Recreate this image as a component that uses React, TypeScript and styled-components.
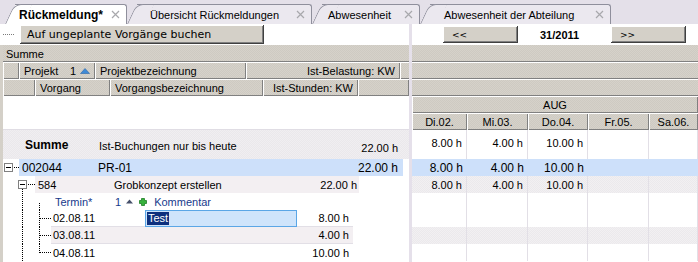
import React from 'react';
import styled, { createGlobalStyle } from 'styled-components';

const GlobalStyle = createGlobalStyle`
  html, body { margin: 0; padding: 0; background: #fff; }
  body {
    font-family: "Liberation Sans", Arial, sans-serif;
    font-size: 11px;
    color: #000;
  }
`;

const hatch = (a: string, b: string) =>
  `background-color: ${a}; background-image: repeating-conic-gradient(${a} 0 25%, ${b} 0 50%); background-size: 2px 2px;`;

const BLUE = '#cde0fa';
const LINE = '#e2dfe6';

const Frame = styled.div`
  width: 698px;
  height: 262px;
  overflow: hidden;
  display: flex;
  flex-direction: column;
  background: #fff;
`;

/* ---------- tabs ---------- */
const TabBar = styled.div`
  height: 24px;
  flex: none;
  display: flex;
  align-items: flex-end;
  background: #e4e0e9;
`;

const Tab = styled.div<{ $active?: boolean; $w: number; $pl: number }>`
  position: relative;
  z-index: ${p => (p.$active ? 2 : 1)};
  box-sizing: border-box;
  width: ${p => p.$w}px;
  flex: none;
  height: 20px;
  margin-left: 10px;
  &:first-child { margin-left: 15px; }
  padding: 0 6px 0 ${p => p.$pl}px;
  display: flex;
  align-items: center;
  background: ${p => (p.$active ? '#fff' : '#ebe8ef')};
  border-top: 1px solid #8f8f9c;
  border-right: 1px solid #8f8f9c;
  border-top-right-radius: 3px;
  font-size: ${p => (p.$active ? 12 : 11)}px;
  font-weight: ${p => (p.$active ? 700 : 400)};
  white-space: nowrap;
  &::before {
    content: '';
    position: absolute;
    top: -1px;
    bottom: 0;
    left: -10px;
    width: 17px;
    background: inherit;
    border-left: 1px solid #8f8f9c;
    border-top: 1px solid #8f8f9c;
    border-top-left-radius: 7px;
    transform: skewX(-25deg);
    transform-origin: bottom left;
    z-index: -1;
  }
`;

const TabLabel = styled.span`
  flex: 1;
`;

const Glyph = styled.svg`
  flex: none;
  display: block;
`;

const CloseIcon = () => (
  <Glyph width="9" height="9" viewBox="0 0 9 9">
    <path d="M1 1 L8 8 M8 1 L1 8" stroke="#a8a8ac" strokeWidth="1.2" />
  </Glyph>
);

/* ---------- panes ---------- */
const Body = styled.div`
  flex: 1;
  display: flex;
  min-height: 0;
`;

const LeftPane = styled.div`
  width: 409px;
  flex: none;
  display: flex;
  flex-direction: column;
`;

const Divider = styled.div`
  width: 3px;
  flex: none;
  background: #e5e0ea;
`;

const RightPane = styled.div`
  flex: 1;
  min-width: 0;
  display: flex;
  flex-direction: column;
`;

const Toolbar = styled.div`
  height: 21px;
  flex: none;
  display: flex;
  align-items: center;
  padding-left: 3px;
  background: #fff;
`;

const Grip = styled.div`
  width: 11px;
  flex: none;
  border-top: 1px dotted #7a7a7a;
  margin-right: 6px;
`;

const winButton = `
  box-sizing: border-box;
  flex: none;
  margin: 0;
  border: 0;
  background: #d4d0c8;
  box-shadow: inset -1px -1px #404040, inset 1px 1px #fff, inset -2px -2px #808080;
  color: #000;
  text-align: left;
  cursor: default;
`;

const ToolButton = styled.button`
  ${winButton}
  width: 244px;
  height: 19px;
  padding: 0 0 0 7px;
  font-family: "DejaVu Sans", Verdana, sans-serif;
  font-size: 11px;
`;

const LeftBody = styled.div`
  flex: 1;
  display: flex;
  flex-direction: column;
  border-left: 3px solid #d4d0c8;
`;

const SectionBar = styled.div`
  height: 17px;
  flex: none;
  display: flex;
  align-items: center;
  padding-left: 3px;
  ${hatch('#d6d2ca', '#cecac2')}
  box-shadow: inset 0 -1px #808080;
`;

const HeaderRow = styled.div`
  height: 17px;
  flex: none;
  display: flex;
  ${hatch('#d6d2ca', '#cecac2')}
`;

const HeadCell = styled.div<{ $w?: number; $align?: 'left' | 'right' | 'center' }>`
  box-sizing: border-box;
  width: ${p => (p.$w ? `${p.$w}px` : 'auto')};
  flex: ${p => (p.$w ? 'none' : '1')};
  padding: 0 5px;
  display: flex;
  align-items: center;
  justify-content: ${p => (p.$align === 'right' ? 'flex-end' : p.$align === 'center' ? 'center' : 'flex-start')};
  box-shadow: inset 1px 1px #fff, inset -1px -1px #808080;
  white-space: nowrap;
  overflow: hidden;
`;

const SortArrow = () => (
  <Glyph width="10" height="6" viewBox="0 0 10 6" style={{ marginLeft: 4 }}>
    <polygon points="0.5,5.5 5,0.5 9.5,5.5" fill="#3f8ad6" stroke="#2a64a8" strokeWidth="0.6" />
  </Glyph>
);

const Spacer = styled.div`
  height: 33px;
  flex: none;
  border-bottom: 1px solid #e0dde4;
  background: #fff;
`;

const SumRow = styled.div`
  height: 29px;
  flex: none;
  display: flex;
  align-items: center;
  ${hatch('#f0eef1', '#eae8eb')}
`;

const TreeRow = styled.div<{ $fs?: number }>`
  height: 17px;
  flex: none;
  display: flex;
  align-items: stretch;
  font-size: ${p => p.$fs ?? 11}px;
  background: #fff;
`;

const Band = styled.div<{ $bg: string; $w?: number; $mr?: number; $rule?: boolean }>`
  box-sizing: border-box;
  display: flex;
  align-items: center;
  ${p => (p.$w ? `width: ${p.$w}px; flex: none;` : 'flex: 1;')}
  margin-right: ${p => p.$mr ?? 0}px;
  background: ${p => p.$bg};
  border-bottom: ${p => (p.$rule ? `1px solid ${LINE}` : '0')};
`;

const Cell = styled.div<{ $w?: number; $pl?: number; $pr?: number; $right?: boolean; $bold?: boolean; $fs?: number; $pt?: number }>`
  box-sizing: border-box;
  ${p => (p.$w ? `width: ${p.$w}px; flex: none;` : 'flex: 1;')}
  padding: ${p => p.$pt ?? 0}px ${p => p.$pr ?? 0}px 0 ${p => p.$pl ?? 0}px;
  display: flex;
  align-items: center;
  justify-content: ${p => (p.$right ? 'flex-end' : 'flex-start')};
  white-space: nowrap;
  font-weight: ${p => (p.$bold ? 700 : 400)};
  ${p => (p.$fs ? `font-size: ${p.$fs}px;` : '')}
`;

const BlueText = styled.span`
  color: #173a8c;
  display: inline-flex;
  align-items: center;
`;

const EditBox = styled.div`
  box-sizing: border-box;
  width: 152px;
  height: 17px;
  border: 1px solid #5ba6e6;
  background: #cfe4fb;
  display: flex;
  align-items: center;
  padding-left: 1px;
`;

const Selected = styled.span`
  background: #0d2f7d;
  color: #fff;
  padding: 0 1px;
  line-height: 13px;
`;

/* ---------- right pane ---------- */
const NavBar = styled.div`
  height: 21px;
  flex: none;
  display: flex;
  align-items: center;
  padding-left: 31px;
  background: #fff;
`;

const NavButton = styled.button`
  ${winButton}
  width: 75px;
  height: 17px;
  padding: 0 0 0 9px;
  font-family: "DejaVu Sans", Verdana, sans-serif;
  font-size: 9px;
`;

const WeekLabel = styled.div`
  width: 93px;
  flex: none;
  padding-left: 22px;
  box-sizing: border-box;
  font-weight: 700;
  font-size: 11px;
`;

const GrayRow = styled.div<{ $top?: boolean }>`
  height: 17px;
  flex: none;
  ${hatch('#d6d2ca', '#cecac2')}
  box-shadow: inset 0 -1px #808080${p => (p.$top ? ', inset 0 1px #fff' : '')};
`;

const MonthRow = styled.div`
  height: 17px;
  flex: none;
  display: flex;
  ${hatch('#d6d2ca', '#cecac2')}
`;

const DayGrid = styled.div<{ $h: number; $bg: string; $fs?: number }>`
  height: ${p => p.$h}px;
  flex: none;
  display: grid;
  grid-template-columns: 55px 61px 60px 61px 1fr;
  ${p => p.$bg}
  font-size: ${p => p.$fs ?? 11}px;
`;

const ValueCell = styled.div<{ $lines?: boolean; $top?: boolean }>`
  box-sizing: border-box;
  display: flex;
  justify-content: flex-end;
  align-items: ${p => (p.$top ? 'flex-start' : 'center')};
  padding: ${p => (p.$top ? 7 : 0)}px 4px 0 0;
  border-right: ${p => (p.$lines ? `1px solid ${LINE}` : '0')};
  white-space: nowrap;
`;

/* ---------- tree connectors ---------- */
const dot = { stroke: '#000', strokeWidth: 1, strokeDasharray: '1 1', shapeRendering: 'crispEdges' as const };

const ToggleBox = ({ x }: { x: number }) => (
  <>
    <rect x={x + 0.5} y={4.5} width={8} height={8} fill="#fff" stroke="#808080" shapeRendering="crispEdges" />
    <line x1={x + 2} y1={8.5} x2={x + 7} y2={8.5} stroke="#000" shapeRendering="crispEdges" />
  </>
);

const ProjectGutter = () => (
  <Glyph width="16" height="17">
    <ToggleBox x={1} />
    <line x1={11} y1={8.5} x2={16} y2={8.5} {...dot} />
  </Glyph>
);

const TaskGutter = () => (
  <Glyph width="32" height="17">
    <ToggleBox x={15} />
    <line x1={25} y1={8.5} x2={32} y2={8.5} {...dot} />
    <line x1={19.5} y1={13} x2={19.5} y2={17} {...dot} />
  </Glyph>
);

const LeafGutter = ({ kind }: { kind: 'head' | 'mid' | 'last' }) => (
  <Glyph width="48" height="17">
    <line x1={19.5} y1={0} x2={19.5} y2={17} {...dot} />
    {kind === 'head' && <line x1={36.5} y1={10} x2={36.5} y2={17} {...dot} />}
    {kind !== 'head' && (
      <>
        <line x1={36.5} y1={0} x2={36.5} y2={kind === 'last' ? 9 : 17} {...dot} />
        <line x1={37} y1={8.5} x2={48} y2={8.5} {...dot} />
      </>
    )}
  </Glyph>
);

const PlusIcon = () => (
  <Glyph width="8" height="8" viewBox="0 0 8 8" style={{ margin: '0 7px 0 6px' }}>
    <path d="M2.5 0.5h3v2h2v3h-2v2h-3v-2h-2v-3h2z" fill="#37b23c" stroke="#1e7d25" strokeWidth="0.8" />
  </Glyph>
);

const SmallArrow = () => (
  <Glyph width="7" height="5" viewBox="0 0 7 5" style={{ marginLeft: 5 }}>
    <polygon points="0,4.5 3.5,0.5 7,4.5" fill="#46506a" />
  </Glyph>
);

/* ---------- data ---------- */
const tabs = [
  { label: 'Rückmeldung*', active: true, w: 112, pl: 4 },
  { label: 'Übersicht Rückmeldungen', w: 175, pl: 13 },
  { label: 'Abwesenheit', w: 98, pl: 6 },
  { label: 'Abwesenheit der Abteilung', w: 181, pl: 14 },
];

const days = ['Di.02.', 'Mi.03.', 'Do.04.', 'Fr.05.', 'Sa.06.'];
const hours = ['8.00 h', '4.00 h', '10.00 h', '', ''];
const empty = ['', '', '', '', ''];

const dates = [
  { date: '02.08.11', value: '8.00 h', edit: true },
  { date: '03.08.11', value: '4.00 h', shade: true },
  { date: '04.08.11', value: '10.00 h' },
];

const lightHatch = hatch('#f2f0f2', '#ebe9ec');

const rightRows = [
  { h: 29, bg: 'background: #fff;', vals: hours, lines: true, top: true },
  { h: 17, bg: `background: ${BLUE};`, vals: hours, fs: 12 },
  { h: 17, bg: lightHatch, vals: hours, lines: true },
  { h: 17, bg: 'background: #fff;', vals: empty, lines: true },
  { h: 17, bg: 'background: #fff;', vals: empty, lines: true },
  { h: 17, bg: lightHatch, vals: empty, lines: true },
  { h: 17, bg: 'background: #fff;', vals: empty, lines: true },
];

export default function App() {
  return (
    <>
      <GlobalStyle />
      <Frame>
        <TabBar>
          {tabs.map(t => (
            <Tab key={t.label} $active={t.active} $w={t.w} $pl={t.pl}>
              <TabLabel>{t.label}</TabLabel>
              <CloseIcon />
            </Tab>
          ))}
        </TabBar>

        <Body>
          <LeftPane>
            <Toolbar>
              <Grip />
              <ToolButton>Auf ungeplante Vorgänge buchen</ToolButton>
            </Toolbar>
            <LeftBody>
              <SectionBar>Summe</SectionBar>
              <HeaderRow>
                <HeadCell $w={16} />
                <HeadCell $w={76}>
                  <span style={{ flex: 1 }}>Projekt</span>1<SortArrow />
                </HeadCell>
                <HeadCell $w={151}>Projektbezeichnung</HeadCell>
                <HeadCell $w={154} $align="right">Ist-Belastung: KW</HeadCell>
                <HeadCell $w={9} />
              </HeaderRow>
              <HeaderRow>
                <HeadCell $w={32} />
                <HeadCell $w={75}>Vorgang</HeadCell>
                <HeadCell $w={153}>Vorgangsbezeichnung</HeadCell>
                <HeadCell $w={95} $align="right">Ist-Stunden: KW</HeadCell>
                <HeadCell $w={51} />
              </HeaderRow>
              <Spacer />
              <SumRow>
                <Cell $w={96} $pl={22} $bold $fs={12}>Summe</Cell>
                <Cell $pt={2}>Ist-Buchungen nur bis heute</Cell>
                <Cell $pr={11} $pt={6} $right>22.00 h</Cell>
              </SumRow>

              <TreeRow $fs={12}>
                <ProjectGutter />
                <Band $bg={BLUE} $mr={6}>
                  <Cell $w={76} $pl={3}>002044</Cell>
                  <Cell $pl={3}>PR-01</Cell>
                  <Cell $pr={5} $right>22.00 h</Cell>
                </Band>
              </TreeRow>

              <TreeRow>
                <TaskGutter />
                <Band $bg="#f3eff2" $w={324}>
                  <Cell $w={75} $pl={3}>584</Cell>
                  <Cell $w={153} $pl={4}>Grobkonzept erstellen</Cell>
                  <Cell $pr={2} $right>22.00 h</Cell>
                </Band>
              </TreeRow>

              <TreeRow>
                <LeafGutter kind="head" />
                <Cell $w={59} $pl={4}><BlueText>Termin*</BlueText></Cell>
                <Cell $pl={5}>
                  <BlueText>1<SmallArrow /><PlusIcon />Kommentar</BlueText>
                </Cell>
              </TreeRow>

              {dates.map((d, i) => (
                <TreeRow key={d.date}>
                  <LeafGutter kind={i === dates.length - 1 ? 'last' : 'mid'} />
                  <Band $bg={d.shade ? '#f3eff2' : '#fff'} $w={302} $rule={i < 2}>
                    <Cell $w={94} $pl={2}>{d.date}</Cell>
                    <Cell $w={152}>
                      {d.edit && (
                        <EditBox>
                          <Selected>Test</Selected>
                        </EditBox>
                      )}
                    </Cell>
                    <Cell $pr={4} $right>{d.value}</Cell>
                  </Band>
                </TreeRow>
              ))}
            </LeftBody>
          </LeftPane>

          <Divider />

          <RightPane>
            <NavBar>
              <NavButton>&lt;&lt;</NavButton>
              <WeekLabel>31/2011</WeekLabel>
              <NavButton>&gt;&gt;</NavButton>
            </NavBar>
            <GrayRow />
            <GrayRow $top />
            <GrayRow $top />
            <MonthRow>
              <HeadCell $align="center">AUG</HeadCell>
            </MonthRow>
            <DayGrid $h={17} $bg={hatch('#d6d2ca', '#cecac2')}>
              {days.map(d => (
                <HeadCell key={d} $align="center">{d}</HeadCell>
              ))}
            </DayGrid>
            {rightRows.map((r, i) => (
              <DayGrid key={i} $h={r.h} $bg={r.bg} $fs={r.fs}>
                {r.vals.map((v, j) => (
                  <ValueCell key={j} $lines={r.lines} $top={r.top}>{v}</ValueCell>
                ))}
              </DayGrid>
            ))}
          </RightPane>
        </Body>
      </Frame>
    </>
  );
}
